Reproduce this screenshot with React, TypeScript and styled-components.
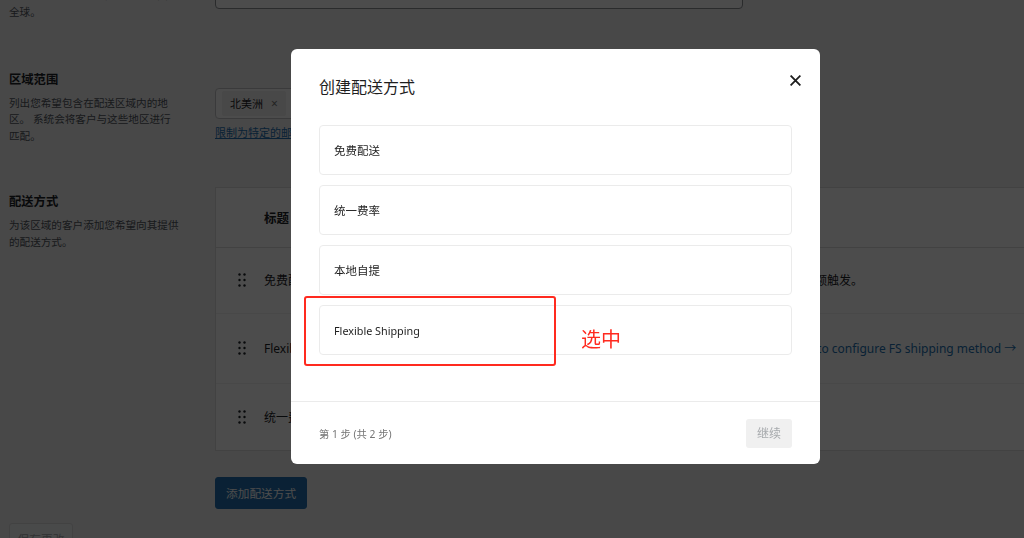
import React from "react";
import styled, { createGlobalStyle } from "styled-components";

const FONT = `"Noto Sans", "Noto Sans CJK SC", sans-serif`;

const Global = createGlobalStyle`
  html, body {
    margin: 0;
    padding: 0;
    background: #f0f0f1;
    font-family: ${FONT};
    color: #1d2327;
    overflow: hidden;
    height: 538px;
  }
  * { box-sizing: border-box; }
`;

const Page = styled.div`
  padding-left: 9px;
  margin-top: -21px;
  width: 1100px;
`;

const Section = styled.div<{ $mt: number }>`
  display: grid;
  grid-template-columns: 206px 1fr;
  margin-top: ${(p) => p.$mt}px;
`;

const Side = styled.div<{ $pt?: number }>`
  padding-top: ${(p) => p.$pt ?? 0}px;
  width: 180px;
`;

const SideTitle = styled.div`
  font-size: 12.3px;
  font-weight: 700;
  line-height: 17px;
  color: #1d2327;
  margin-bottom: 7px;
`;

const SideDesc = styled.div`
  font-size: 10.6px;
  line-height: 16.8px;
  color: #50575e;
  white-space: nowrap;
`;

const Main = styled.div<{ $pt?: number }>`
  padding-top: ${(p) => p.$pt ?? 0}px;
  display: flex;
  flex-direction: column;
  align-items: flex-start;
`;

const Input = styled.div`
  width: 528px;
  height: 30px;
  background: #fff;
  border: 1px solid #8c8f94;
  border-radius: 4px;
`;

const SelectBox = styled.div`
  width: 528px;
  height: 31px;
  background: #fff;
  border: 1px solid #c3c4c7;
  border-radius: 4px;
  display: flex;
  align-items: center;
  padding: 0 6px;
`;

const Chip = styled.span`
  display: inline-flex;
  align-items: center;
  gap: 8px;
  height: 25px;
  padding: 0 8px;
  background: #f0f0f0;
  border-radius: 2px;
  font-size: 11px;
  color: #1d2327;
`;

const ChipX = styled.span`
  font-size: 12px;
  color: #757575;
`;

const Link = styled.a`
  margin-top: 5px;
  font-size: 11px;
  line-height: 17px;
  color: #2271b1;
  text-decoration: underline;
`;

const Table = styled.div`
  width: 880px;
  background: #fff;
  border: 1px solid #dcdcde;
`;

const Row = styled.div<{ $h: number; $head?: boolean }>`
  display: grid;
  grid-template-columns: 48px 520px 1fr;
  align-items: center;
  height: ${(p) => p.$h}px;
  border-bottom: ${(p) => (p.$head ? "1px solid #dcdcde" : "1px solid #f0f0f1")};
  &:last-child { border-bottom: none; }
  font-size: ${(p) => (p.$head ? "12.5px" : "12px")};
  font-weight: ${(p) => (p.$head ? 700 : 400)};
  color: #1d2327;
`;

const Handle = styled.div`
  display: flex;
  justify-content: center;
  padding-left: 4px;
`;

const Desc = styled.span<{ $indent?: number }>`
  margin-left: ${(p) => p.$indent ?? 0}px;
`;

const DescLink = styled(Desc)`
  color: #2271b1;
`;

const PrimaryButton = styled.button`
  margin-top: 26px;
  height: 32px;
  padding: 0 10px;
  background: #2271b1;
  border: 1px solid #2271b1;
  border-radius: 3px;
  color: #fff;
  font-family: ${FONT};
  font-size: 11.7px;
`;

const SaveButton = styled.button`
  margin-top: 14px;
  height: 32px;
  width: 64px;
  background: #f6f7f7;
  border: 1px solid #dcdcde;
  border-radius: 3px;
  color: #a7aaad;
  font-family: ${FONT};
  font-size: 11.7px;
  padding: 0;
`;

const Overlay = styled.div`
  position: fixed;
  inset: 0;
  background: rgba(0, 0, 0, 0.7);
`;

const Modal = styled.div`
  position: fixed;
  left: 291px;
  top: 49px;
  width: 529px;
  height: 415px;
  background: #fff;
  border-radius: 6px;
  display: flex;
  flex-direction: column;
`;

const ModalHeader = styled.div`
  display: flex;
  justify-content: space-between;
  align-items: flex-start;
  padding: 26px 19px 0 28px;
`;

const ModalTitle = styled.h1`
  margin: 0;
  font-size: 16px;
  line-height: 24px;
  font-weight: 400;
  color: #1e1e1e;
`;

const Close = styled.button`
  border: none;
  background: none;
  padding: 0;
  margin-top: 0;
  width: 11px;
  height: 11px;
  display: flex;
`;

const Options = styled.div`
  display: flex;
  flex-direction: column;
  gap: 10px;
  padding: 26px 28px 0;
  flex: 1;
`;

const Option = styled.div<{ $latin?: boolean }>`
  height: 50px;
  border: 1px solid #ebebeb;
  border-radius: 4px;
  display: flex;
  align-items: center;
  padding: 0 14px;
  font-size: ${(p) => (p.$latin ? "10.8px" : "11.5px")};
  color: #1e1e1e;
`;

const Footer = styled.div`
  height: 63px;
  border-top: 1px solid #ebebeb;
  display: flex;
  justify-content: space-between;
  align-items: center;
  padding: 0 28px;
`;

const Step = styled.span`
  font-size: 10.3px;
  color: #757575;
`;

const ContinueButton = styled.button`
  width: 46px;
  height: 29px;
  border: none;
  border-radius: 3px;
  background: #f0f0f0;
  color: #a7aaad;
  font-family: ${FONT};
  font-size: 12px;
  padding: 0;
`;

const Annotation = styled.div`
  position: fixed;
  left: 304px;
  top: 296px;
  width: 252px;
  height: 70px;
  border: 2.5px solid #ff2a1f;
  border-radius: 3px;
`;

const AnnotationText = styled.div`
  position: fixed;
  left: 581px;
  top: 326px;
  font-size: 20px;
  line-height: 28px;
  color: #ff2a1f;
`;

const DragIcon = () => (
  <svg width="8" height="14" viewBox="0 0 8 14">
    {[1.5, 7, 12.5].map((y) =>
      [1.5, 6.5].map((x) => <circle key={`${x}-${y}`} cx={x} cy={y} r="1.2" fill="#1d2327" />)
    )}
  </svg>
);

const options = ["免费配送", "统一费率", "本地自提", "Flexible Shipping"];

export default function App() {
  return (
    <>
      <Global />
      <Page>
        <Section $mt={0}>
          <Side $pt={8}>
            <SideDesc>
              选择此区域内的地区，例如一个国家
              <br />
              全球。
            </SideDesc>
          </Side>
          <Main>
            <Input />
          </Main>
        </Section>

        <Section $mt={50}>
          <Side>
            <SideTitle>区域范围</SideTitle>
            <SideDesc>
              列出您希望包含在配送区域内的地
              <br />
              区。 系统会将客户与这些地区进行
              <br />
              匹配。
            </SideDesc>
          </Side>
          <Main $pt={17}>
            <SelectBox>
              <Chip>
                北美洲 <ChipX>×</ChipX>
              </Chip>
            </SelectBox>
            <Link>限制为特定的邮政编码</Link>
          </Main>
        </Section>

        <Section $mt={42}>
          <Side $pt={6}>
            <SideTitle>配送方式</SideTitle>
            <SideDesc>
              为该区域的客户添加您希望向其提供
              <br />
              的配送方式。
            </SideDesc>
          </Side>
          <Main>
            <Table>
              <Row $h={60} $head>
                <span />
                <span>标题</span>
                <span>描述</span>
              </Row>
              <Row $h={66}>
                <Handle>
                  <DragIcon />
                </Handle>
                <span>免费配送</span>
                <Desc $indent={-5}>最低金额触发。</Desc>
              </Row>
              <Row $h={70}>
                <Handle>
                  <DragIcon />
                </Handle>
                <span>Flexible Shipping</span>
                <DescLink $indent={4}>Click to configure FS shipping method →</DescLink>
              </Row>
              <Row $h={66}>
                <Handle>
                  <DragIcon />
                </Handle>
                <span>统一费率</span>
                <span />
              </Row>
            </Table>
            <PrimaryButton>添加配送方式</PrimaryButton>
          </Main>
        </Section>
        <SaveButton>保存更改</SaveButton>
      </Page>

      <Overlay />
      <Modal>
        <ModalHeader>
          <ModalTitle>创建配送方式</ModalTitle>
          <Close aria-label="关闭">
            <svg width="11" height="11" viewBox="0 0 11 11">
              <path d="M1.2 1.2 L9.8 9.8 M9.8 1.2 L1.2 9.8" stroke="#1e1e1e" strokeWidth="1.8" strokeLinecap="square" />
            </svg>
          </Close>
        </ModalHeader>
        <Options>
          {options.map((o) => (
            <Option key={o} $latin={/^[A-Za-z]/.test(o)}>
              {o}
            </Option>
          ))}
        </Options>
        <Footer>
          <Step>第 1 步 (共 2 步)</Step>
          <ContinueButton disabled>继续</ContinueButton>
        </Footer>
      </Modal>
      <Annotation />
      <AnnotationText>选中</AnnotationText>
    </>
  );
}
